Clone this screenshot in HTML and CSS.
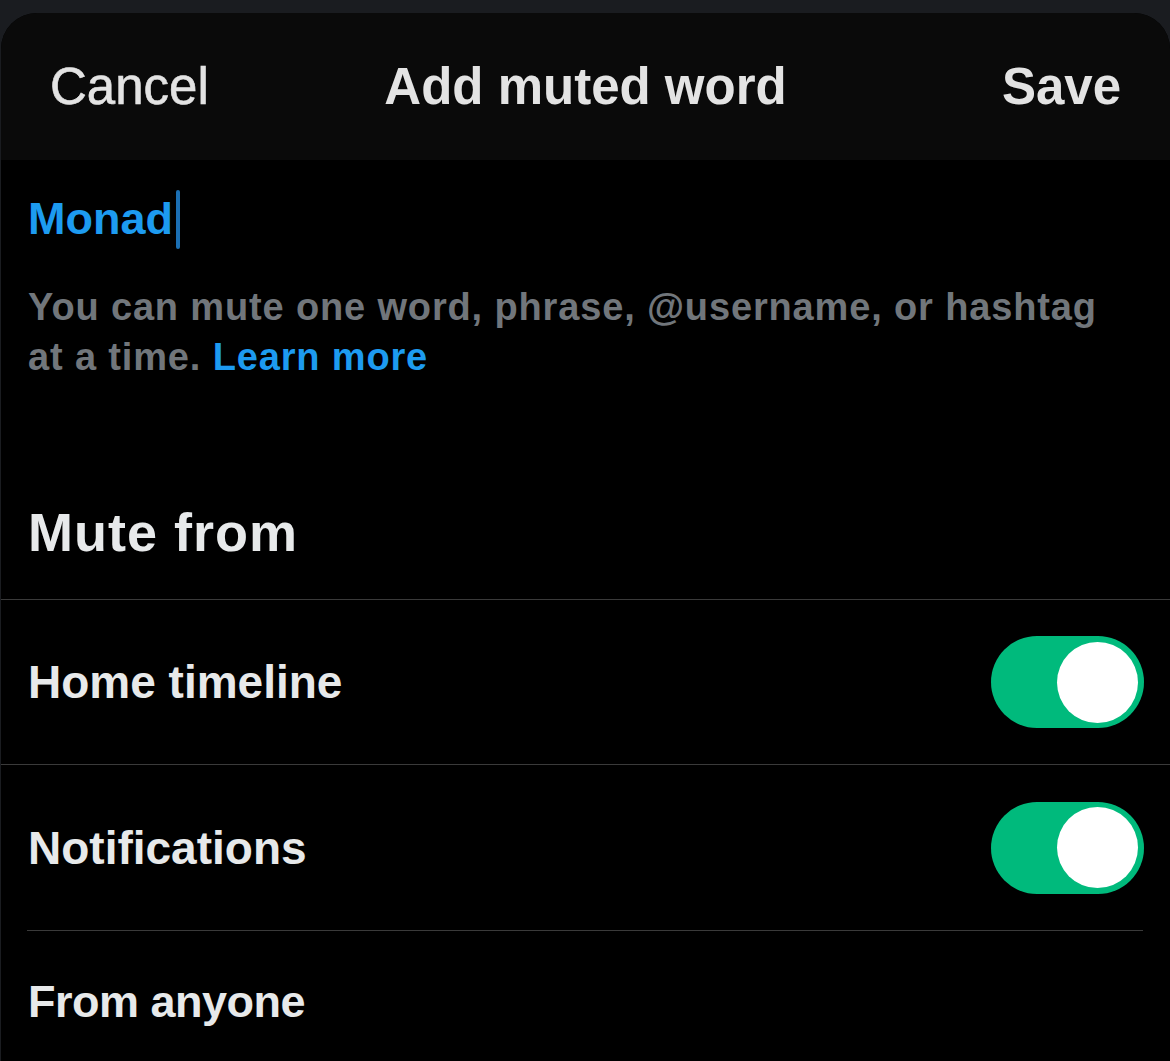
FILE: index.html
```html
<!DOCTYPE html>
<html lang="en">
<head>
<meta charset="utf-8">
<title>Add muted word</title>
<link rel="stylesheet" href="styles.css">
</head>
<body>
<div class="sheet">
  <header class="header">
    <span class="cancel">Cancel</span>
    <span class="title">Add muted word</span>
    <span class="save">Save</span>
  </header>
  <main class="content">
    <div class="input-line"><span class="word">Monad</span><span class="cursor"></span></div>
    <p class="help">You can mute one word, phrase, @username, or hashtag at a time. <span class="link">Learn more</span></p>
    <h2 class="section-title">Mute from</h2>
  </main>
  <div class="row row-divided">
    <span class="row-label">Home timeline</span>
    <span class="toggle"><span class="knob"></span></span>
  </div>
  <div class="row">
    <span class="row-label">Notifications</span>
    <span class="toggle"><span class="knob"></span></span>
  </div>
  <div class="row row-inset">
    <span class="row-label row-label-small">From anyone</span>
  </div>
</div>
</body>
</html>
```
FILE: styles.css
```css
html, body {
  margin: 0;
  padding: 0;
  background: #1a1c20;
  height: 100%;
  overflow: hidden;
}
body {
  font-family: "Liberation Sans", Arial, sans-serif;
  color: #e7e9ea;
}
.sheet {
  margin-top: 13px;
  margin-left: 1px;
  background: #000;
  border-radius: 36px 36px 0 0;
  overflow: hidden;
  height: 1048px;
}
.header {
  height: 147px;
  background: #0a0a0a;
  display: grid;
  grid-template-columns: 1fr auto 1fr;
  align-items: center;
  padding: 0 49px 0 49px;
  font-size: 51px;
  color: #e3e3e3;
}
.cancel { justify-self: start; font-weight: 400; -webkit-text-stroke: 0.6px #e3e3e3; }
.title { font-weight: 700; }
.save { justify-self: end; font-weight: 700; }
.content {
  padding: 29px 28px 0 27px;
  border-bottom: 1px solid #3a3a3a;
}
.input-line {
  display: flex;
  align-items: center;
  height: 60px;
}
.word {
  font-size: 45px;
  font-weight: 700;
  color: #1d9bf0;
  line-height: 60px;
}
.cursor {
  display: inline-block;
  width: 4px;
  height: 59px;
  border-radius: 2px;
  margin-left: 3px;
  background: #1b6fb3;
}
.help {
  margin: 33px 0 0 0;
  max-width: 1080px;
  font-size: 38px;
  line-height: 50px;
  font-weight: 700;
  letter-spacing: 0.85px;
  color: #71767b;
}
.link { color: #1d9bf0; }
.section-title {
  margin: 120px 0 0 0;
  font-size: 54px;
  line-height: 60px;
  font-weight: 700;
  letter-spacing: 1px;
  color: #e7e9ea;
  padding-bottom: 37px;
}
.row {
  display: flex;
  align-items: center;
  justify-content: space-between;
  height: 165px;
  box-sizing: border-box;
  padding: 0 26px 0 27px;
}
.row-divided {
  border-bottom: 1px solid #3a3a3a;
}
.row-inset {
  margin-left: 26px;
  margin-right: 27px;
  padding-left: 1px;
  border-top: 1px solid #3a3a3a;
  align-items: flex-start;
  padding-top: 43px;
}
.row-label {
  font-size: 46px;
  font-weight: 700;
  line-height: 56px;
  color: #e7e9ea;
}
.row-label-small {
  font-size: 45px;
  letter-spacing: -0.5px;
}
.toggle {
  width: 153px;
  height: 92px;
  border-radius: 46px;
  background: #00ba7c;
  display: flex;
  align-items: center;
  justify-content: flex-end;
  padding: 0 6px;
  box-sizing: border-box;
}
.knob {
  width: 81px;
  height: 81px;
  border-radius: 50%;
  background: #fff;
}
```
